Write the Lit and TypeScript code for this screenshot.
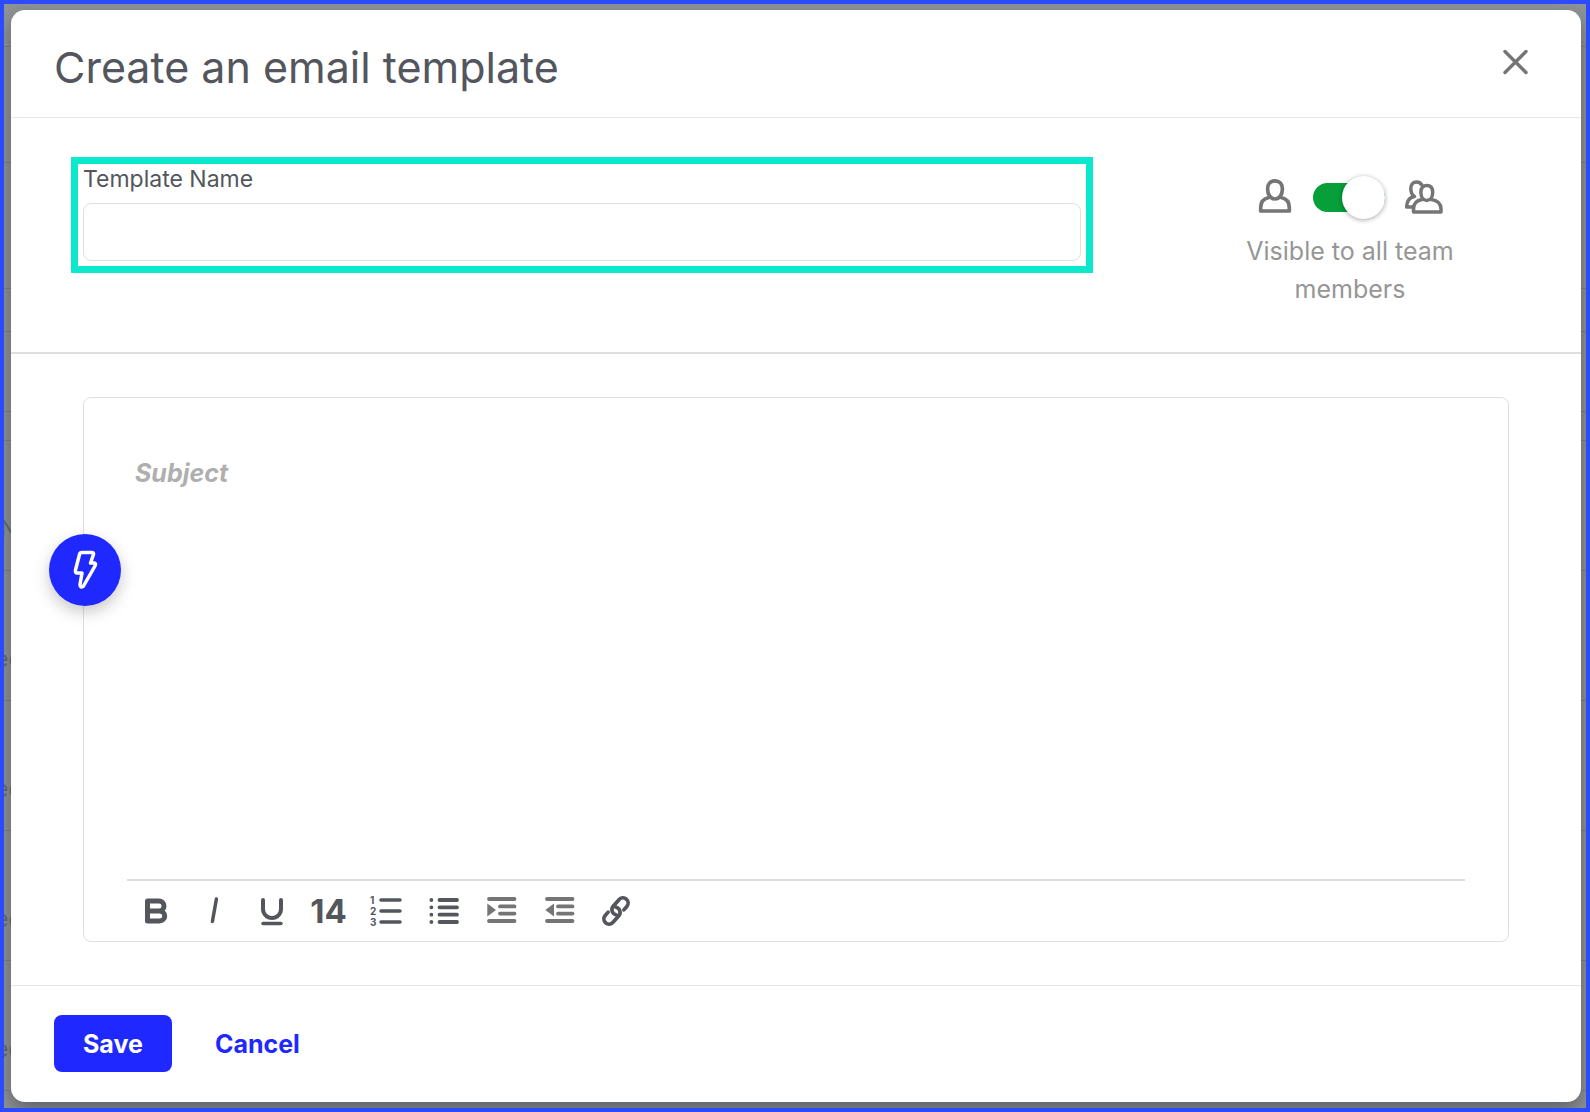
import { LitElement, html, svg, css } from "lit";
import { customElement, state } from "lit/decorators.js";

const stroke = (d: string, width: number) =>
  svg`<path d=${d} fill="none" stroke="currentColor" stroke-width=${width} stroke-linecap="round" stroke-linejoin="round"/>`;

const tools = [
  { label: "Bold", art: stroke("M11.5 10H23a5 5 0 0 1 0 10H11.5M23 20h.5a5.2 5 0 0 1 0 10H11.5V10", 5) },
  { label: "Italic", art: stroke("M22.4 8L18.4 30.5", 3.5) },
  { label: "Underline", art: svg`${stroke("M12 9V18a9 9 0 0 0 18 0V9", 4)}${stroke("M12 32.5H30", 3.4)}` },
  { label: "Font size", size: 14 },
  {
    label: "Numbered list",
    art: svg`${stroke("M15 9H34M15 20H34M15 31H34", 3.5)}
      <g class="digits"><text x="4" y="13">1</text><text x="4" y="24">2</text><text x="4" y="35">3</text></g>`,
  },
  {
    label: "Bulleted list",
    art: svg`${stroke("M15.5 9H33M15.5 16.3H33M15.5 23.7H33M15.5 31H33", 3.8)}${stroke("M7.4 9h.01M7.4 16.3h.01M7.4 23.7h.01M7.4 31h.01", 3.8)}`,
  },
  {
    label: "Indent",
    muted: true,
    art: svg`${stroke("M8 8H33.5M19 15.4H33.5M19 22.6H33.5M8 30H33.5", 3.8)}<path d="M6.3 12.5L15 19L6.3 25.5Z" fill="currentColor"/>`,
  },
  {
    label: "Outdent",
    muted: true,
    art: svg`${stroke("M8 8H33.5M19 15.4H33.5M19 22.6H33.5M8 30H33.5", 3.8)}<path d="M15 12.5L6.3 19L15 25.5Z" fill="currentColor"/>`,
  },
  {
    label: "Link",
    art: svg`<g transform="rotate(-49 20 20)">${stroke("M26 25.2H30.5a5.2 5.2 0 0 0 0-10.4H21.7a5.2 5.2 0 0 0-4.6 7.6M14 14.8H9.5a5.2 5.2 0 0 0 0 10.4H18.3a5.2 5.2 0 0 0 4.6-7.6", 3.7)}</g>`,
  },
];

@customElement("app-root")
export class AppRoot extends LitElement {
  @state() private shared = true;

  static styles = css`
    :host {
      display: block;
      font-family: Inter, "Liberation Sans", sans-serif;
      color: #53565d;
    }
    * { box-sizing: border-box; }
    button, input, textarea { font: inherit; color: inherit; margin: 0; }
    button { border: 0; background: none; padding: 0; cursor: pointer; }
    svg { display: block; }

    .screen {
      position: relative;
      display: flex;
      min-height: 100vh;
      padding: 6px 5px 6px 7px;
      border: 4px solid #2c4bff;
      background: #909497;
      overflow: hidden;
    }
    .page {
      position: absolute;
      inset: 0;
      display: flex;
      flex-direction: column;
      font-size: 23px;
      line-height: 28px;
      color: #6a6d70;
    }
    .row {
      flex: none;
      height: 130px;
      padding-top: 74px;
      border-bottom: 1px solid #808386;
      text-indent: -9px;
    }
    .row.first { text-indent: -4px; }
    .row.bar { height: 43px; padding: 0; }
    .row.tall { height: 116px; }
    .row.big { height: 126px; }
    .row.mid { height: 80px; }
    .row.thin { height: 29px; padding: 0; }

    .modal {
      position: relative;
      display: flex;
      flex: 1;
      flex-direction: column;
      min-width: 0;
      border-radius: 14px;
      background: #fff;
      box-shadow: 0 8px 20px rgba(0, 0, 0, 0.35);
    }
    .head {
      display: flex;
      justify-content: space-between;
      align-items: flex-start;
      padding: 30px 43px 23px;
      border-bottom: 1px solid #e8e8e8;
    }
    h1 { margin: 0; font-size: 43px; line-height: 54px; font-weight: 400; }
    .close { width: 44px; height: 44px; color: #757575; }

    .meta {
      display: grid;
      grid-template-columns: minmax(0, 1fr) 320px;
      gap: 108px;
      padding: 51px 72px 44px;
      border-bottom: 2px solid #dedede;
    }
    .field {
      display: flex;
      flex-direction: column;
      align-self: start;
      gap: 14px;
      outline: 7px solid #0ce8cb;
      outline-offset: 5px;
    }
    .field label { font-size: 23px; line-height: 20px; }
    .field input {
      width: 100%;
      height: 58px;
      padding: 0 16px;
      border: 1px solid #dfdfdf;
      border-radius: 8px;
      background: #fff;
      font-size: 25px;
    }
    .sharing {
      display: flex;
      flex-direction: column;
      align-items: center;
      gap: 13px;
      padding: 6px 0 0 2px;
      color: #757575;
    }
    .switch { display: flex; align-items: center; gap: 20px; }
    .toggle {
      appearance: none;
      display: flex;
      align-items: center;
      width: 72px;
      height: 29px;
      border-radius: 15px;
      background: #c4c4c4;
      cursor: pointer;
    }
    .toggle::before {
      content: "";
      width: 43px;
      height: 43px;
      flex: none;
      border-radius: 50%;
      background: #fff;
      box-shadow: 0 1px 5px rgba(0, 0, 0, 0.35);
    }
    .toggle:checked { justify-content: flex-end; background: #069f3a; }
    .hint {
      max-width: 240px;
      font-size: 25px;
      line-height: 38px;
      text-align: center;
      color: #969696;
    }

    .body { display: flex; flex: 1; padding: 43px 72px; }
    .editor {
      position: relative;
      display: flex;
      flex: 1;
      flex-direction: column;
      min-width: 0;
      padding: 50px 43px 0;
      border: 1px solid #dfdfdf;
      border-radius: 8px;
    }
    .editor input, .editor textarea {
      width: 100%;
      padding: 0 8px;
      border: 0;
      outline: 0;
      background: none;
      font-size: 25px;
    }
    .editor .subject { height: 50px; font-weight: 700; font-style: italic; }
    .subject::placeholder { color: #afafaf; opacity: 1; }
    .message { flex: 1; resize: none; }
    .tools {
      display: flex;
      align-items: center;
      height: 62px;
      border-top: 2px solid #dedede;
    }
    .set {
      display: flex;
      justify-content: space-between;
      width: 500px;
      margin-left: 9px;
    }
    .tool { width: 40px; height: 40px; }
    .tool.muted { color: #757575; }
    .tool.size { font-size: 33px; line-height: 40px; font-weight: 700; }
    .digits { font-size: 10px; font-weight: 700; fill: currentColor; }
    .bolt {
      position: absolute;
      top: 136px;
      left: -35px;
      display: grid;
      place-items: center;
      width: 72px;
      height: 72px;
      border-radius: 50%;
      background: #1f29ff;
      color: #fff;
      box-shadow: 0 6px 16px rgba(0, 0, 0, 0.22);
    }

    .foot {
      display: flex;
      align-items: center;
      gap: 43px;
      padding: 29px 43px 30px;
      border-top: 1px solid #e8e8e8;
      font-size: 25px;
      font-weight: 700;
    }
    .save {
      height: 57px;
      padding: 0 29px;
      border-radius: 8px;
      background: #1f29ff;
      color: #fff;
    }
    .cancel { height: 57px; color: #1f29ff; }
  `;

  private toggle(e: Event) {
    this.shared = (e.target as HTMLInputElement).checked;
  }

  render() {
    return html`
      <div class="screen">
        <div class="page" aria-hidden="true">
          <div class="row bar"></div>
          <div class="row tall"></div>
          <div class="row big"></div>
          <div class="row bar"></div>
          <div class="row mid"></div>
          <div class="row thin"></div>
          <div class="row first">N</div>
          <div class="row">ed</div>
          <div class="row">ed</div>
          <div class="row">ed</div>
          <div class="row">ed</div>
        </div>
        <form class="modal" role="dialog" aria-labelledby="title" @submit=${(e: Event) => e.preventDefault()}>
          <header class="head">
            <h1 id="title">Create an email template</h1>
            <button class="close" type="button" aria-label="Close">
              <svg width="44" height="44" viewBox="0 0 44 44">${stroke("M11 11.5L32 32.5M32 11.5L11 32.5", 3.4)}</svg>
            </button>
          </header>
          <section class="meta">
            <div class="field">
              <label for="name">Template Name</label>
              <input id="name" type="text" />
            </div>
            <div class="sharing">
              <div class="switch">
                <svg width="36" height="44" viewBox="0 0 36 44">
                  ${stroke("M18 5.8c-4.6 0-7.4 3-7.4 8.2 0 5.8 3 10 7.4 10s7.4-4.2 7.4-10c0-5.2-2.8-8.2-7.4-8.2Z", 3.7)}
                  ${stroke("M12 22.5C6.5 23.5 3.7 27.5 3.7 32.5V36H32.3V32.5C32.3 27.5 29.5 23.5 24 22.5", 3.7)}
                </svg>
                <input class="toggle" id="shared" type="checkbox" role="switch" .checked=${this.shared} @change=${this.toggle} />
                <svg width="38" height="44" viewBox="1 -1 38 44">
                  ${stroke("M17.5 8.5C16.5 6.8 14.6 6 12.5 6 8.8 6 6.8 8.8 6.8 12.5c0 3.8 1.6 6.6 3.6 8C5 21.5 2.7 25 2.7 31H9", 3.5)}
                  ${stroke("M22.8 9.6c-3.7 0-5.9 2.6-5.9 6.9 0 4.8 2.5 8 5.9 8s5.9-3.2 5.9-8c0-4.3-2.2-6.9-5.9-6.9Z", 3.5)}
                  ${stroke("M18 23.5C12 24.5 9.5 28 9.5 33V36H37V33C37 28 33.5 24.5 27.5 23.5", 3.5)}
                </svg>
              </div>
              <label class="hint" for="shared">Visible to all team members</label>
            </div>
          </section>
          <section class="body">
            <div class="editor">
              <input class="subject" type="text" aria-label="Subject" placeholder="Subject" />
              <textarea class="message" aria-label="Message"></textarea>
              <div class="tools" role="toolbar" aria-label="Formatting">
                <div class="set">
                  ${tools.map((t) =>
                    t.size
                      ? html`<button class="tool size" type="button" aria-label=${t.label}>${t.size}</button>`
                      : html`<button class="tool ${t.muted ? "muted" : ""}" type="button" aria-label=${t.label}>
                          <svg width="40" height="40" viewBox="0 0 40 40">${t.art}</svg>
                        </button>`,
                  )}
                </div>
              </div>
              <button class="bolt" type="button" aria-label="Shortcuts">
                <svg width="40" height="44" viewBox="0 0 40 44">
                  ${stroke("M17 4.5H27Q29 4.5 28.5 6.5L25.5 15H29Q31.5 15 30 18L18.5 38Q15 40.5 15 36.5L17 25H12Q10 24.5 10.5 22L14.5 6.5Q15 4.5 17 4.5Z", 3.5)}
                </svg>
              </button>
            </div>
          </section>
          <footer class="foot">
            <button class="save" type="submit">Save</button>
            <button class="cancel" type="button">Cancel</button>
          </footer>
        </form>
      </div>
    `;
  }
}
